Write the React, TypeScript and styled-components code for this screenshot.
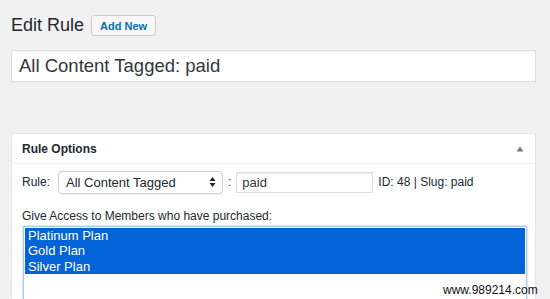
import React from "react";
import styled, { createGlobalStyle } from "styled-components";

const GlobalStyle = createGlobalStyle`
  html, body { margin: 0; padding: 0; }
  body {
    background: #f1f1f1;
    font-family: "Liberation Sans", Arial, sans-serif;
    color: #23282d;
    width: 550px;
    height: 299px;
    overflow: hidden;
  }
`;

const Page = styled.div`
  position: relative;
  display: flex;
  flex-direction: column;
  padding: 15px 14px 0 11px;
  height: 299px;
  box-sizing: border-box;
  overflow: hidden;
`;

const HeaderRow = styled.div`
  display: flex;
  align-items: center;
  gap: 7px;
  height: 21px;
  flex: none;
`;

const Title = styled.h1`
  margin: 0;
  font-size: 18px;
  font-weight: 400;
  line-height: 21px;
  color: #23282d;
`;

const AddButton = styled.button`
  height: 21px;
  width: 65px;
  padding: 0;
  border: 1px solid #cccccc;
  border-radius: 3px;
  background: #f7f7f7;
  color: #0073aa;
  font-family: "Liberation Sans", Arial, sans-serif;
  font-size: 11px;
  font-weight: 700;
  box-sizing: border-box;
`;

const TitleInput = styled.div`
  flex: none;
  margin-top: 14px;
  height: 32px;
  box-sizing: border-box;
  border: 1px solid #dddddd;
  background: #ffffff;
  display: flex;
  align-items: center;
  padding-left: 7px;
  font-size: 18.5px;
  color: #32373c;
  box-shadow: inset 0 1px 2px rgba(0, 0, 0, 0.04);
`;

const Postbox = styled.div`
  flex: 1;
  min-height: 0;
  display: flex;
  flex-direction: column;
  margin-top: 51px;
  border: 1px solid #e5e5e5;
  border-bottom: none;
  background: #ffffff;
  box-shadow: 0 1px 1px rgba(0, 0, 0, 0.04);
`;

const PostboxHeader = styled.div`
  flex: none;
  display: flex;
  align-items: center;
  justify-content: space-between;
  height: 30px;
  padding: 0 11px 0 10px;
  border-bottom: 1px solid #eeeeee;
  box-sizing: border-box;
  font-size: 12px;
  font-weight: 700;
  color: #23282d;
`;

const Inside = styled.div`
  flex: 1;
  min-height: 0;
  display: flex;
  flex-direction: column;
  padding: 6px 10px 0 10px;
`;

const RuleRow = styled.div`
  display: flex;
  align-items: center;
  height: 24px;
  font-size: 12px;
  color: #23282d;
`;

const Label = styled.span`
  margin-right: 8px;
`;

const FakeSelect = styled.div`
  width: 165px;
  height: 23px;
  box-sizing: border-box;
  border: 1px solid #cfcfcf;
  border-radius: 4px;
  background: #ffffff;
  display: flex;
  align-items: center;
  justify-content: space-between;
  padding: 0 6px 0 7px;
  font-size: 13px;
  color: #23282d;
  box-shadow: 0 1px 1px rgba(0, 0, 0, 0.06);
`;

const Colon = styled.span`
  margin: 0 5px 0 5px;
  font-size: 12px;
`;

const SmallInput = styled.div`
  width: 137px;
  height: 21px;
  box-sizing: border-box;
  border: 1px solid #dddddd;
  background: #ffffff;
  display: flex;
  align-items: center;
  padding-left: 5px;
  font-size: 13px;
  color: #32373c;
  box-shadow: inset 0 1px 2px rgba(0, 0, 0, 0.07);
`;

const Meta = styled.span`
  margin-left: 5px;
  font-size: 12px;
`;

const AccessLabel = styled.div`
  margin-top: 15px;
  font-size: 12px;
  line-height: 14px;
  color: #23282d;
`;

const ListBox = styled.div`
  flex: 1;
  margin-top: 3px;
  margin-left: 1px;
  width: 504px;
  box-sizing: border-box;
  border: 1px solid #a9c9ea;
  border-bottom: none;
  box-shadow: 0 0 2px rgba(30, 140, 190, 0.5);
  background: #ffffff;
  padding: 1px 1px 0 1px;
`;

const Option = styled.div`
  background: #0264d6;
  color: #ffffff;
  font-size: 13px;
  line-height: 15.33px;
  height: 15.33px;
  padding-left: 3px;
`;

const Watermark = styled.div`
  position: absolute;
  left: 443px;
  top: 284px;
  font-family: "Liberation Sans", Arial, sans-serif;
  font-size: 12px;
  line-height: 13px;
  color: #111111;
`;

const ToggleArrow = () => (
  <svg width="8" height="6" viewBox="0 0 8 6">
    <polygon points="4,0.5 7.5,5.5 0.5,5.5" fill="#72777c" />
  </svg>
);

const UpDown = () => (
  <svg width="7" height="10" viewBox="0 0 7 10">
    <polygon points="3.5,0 6.5,4 0.5,4" fill="#222" />
    <polygon points="3.5,10 6.5,6 0.5,6" fill="#222" />
  </svg>
);

export default function App() {
  const plans = ["Platinum Plan", "Gold Plan", "Silver Plan"];
  return (
    <>
      <GlobalStyle />
      <Page>
        <HeaderRow>
          <Title>Edit Rule</Title>
          <AddButton>Add New</AddButton>
        </HeaderRow>
        <TitleInput>All Content Tagged: paid</TitleInput>
        <Postbox>
          <PostboxHeader>
            <span>Rule Options</span>
            <ToggleArrow />
          </PostboxHeader>
          <Inside>
            <RuleRow>
              <Label>Rule:</Label>
              <FakeSelect>
                <span>All Content Tagged</span>
                <UpDown />
              </FakeSelect>
              <Colon>:</Colon>
              <SmallInput>paid</SmallInput>
              <Meta>ID: 48 | Slug: paid</Meta>
            </RuleRow>
            <AccessLabel>Give Access to Members who have purchased:</AccessLabel>
            <ListBox>
              {plans.map((p) => (
                <Option key={p}>{p}</Option>
              ))}
            </ListBox>
          </Inside>
        </Postbox>
        <Watermark>www.989214.com</Watermark>
      </Page>
    </>
  );
}
